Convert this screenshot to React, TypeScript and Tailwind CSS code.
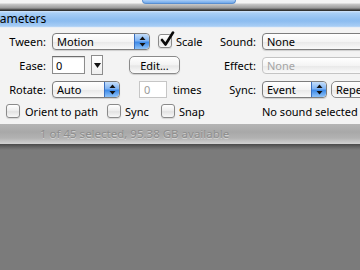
import React from "react";

function Stepper() {
  return (
    <span className="flex h-full w-[15px] shrink-0 items-center justify-center rounded-r-[4px] border-l border-[#3a6fc0] bg-[linear-gradient(#c4defb,#7fb3f3_45%,#3d8ae8_55%,#8fc3f8)]">
      <svg width="7" height="11" viewBox="0 0 7 11">
        <polygon points="3.5,0.5 6.5,4 0.5,4" fill="#111" />
        <polygon points="0.5,7 6.5,7 3.5,10.5" fill="#111" />
      </svg>
    </span>
  );
}

function Popup({
  className,
  label,
  disabled,
  stepper,
}: {
  className: string;
  label: string;
  disabled?: boolean;
  stepper?: boolean;
}) {
  return (
    <div
      className={`flex h-[17px] shrink-0 items-stretch rounded-[4px] border bg-[linear-gradient(#ffffff,#f4f4f4_50%,#e9e9e9_55%,#fafafa)] ${
        disabled ? "border-[#c4c4c4]" : "border-[#7d7d7d] shadow-[0_1px_1px_rgba(0,0,0,0.15)]"
      } ${className}`}
    >
      <span
        className={`flex flex-1 items-center pl-[4px] leading-none ${
          disabled ? "text-[#a5a5a5]" : "text-black"
        }`}
      >
        {label}
      </span>
      {stepper && <Stepper />}
    </div>
  );
}

function Check({ checked }: { checked?: boolean }) {
  return (
    <span className="relative flex h-[14px] w-[14px] shrink-0 rounded-[3px] border border-[#8a8a8a] bg-[linear-gradient(#ffffff,#ececec_50%,#e2e2e2_55%,#f8f8f8)] shadow-[0_1px_1px_rgba(0,0,0,0.12)]">
      {checked && (
        <svg
          className="absolute left-[1px] top-[-4px]"
          width="15"
          height="16"
          viewBox="0 0 15 16"
        >
          <path
            d="M2 9 L5.5 13.5 L13 1.5"
            fill="none"
            stroke="#0a0a0a"
            strokeWidth="2.6"
            strokeLinecap="round"
            strokeLinejoin="round"
          />
        </svg>
      )}
    </span>
  );
}

function Label({ children }: { children: React.ReactNode }) {
  return (
    <span className="w-[46px] shrink-0 text-right leading-none text-black">{children}</span>
  );
}

export default function App() {
  return (
    <div className="flex h-[270px] w-[360px] flex-col overflow-hidden bg-[#7b7b7b] font-['Noto_Sans',sans-serif] text-[11px]">
      {/* background window strip */}
      <div className="relative h-[11px] shrink-0 bg-[linear-gradient(#f4f4f4_0px,#f4f4f4_3px,#c9c9c9_4px,#9a9a9a_8px,#3c3c3c_10px,#2a2a2a_11px)]">
        <div className="absolute left-[142px] top-0 h-[4px] w-[94px] rounded-b-[5px] border border-t-0 border-[#5a8fd0] bg-[linear-gradient(#a9cdf6,#6fa8ec)]" />
      </div>

      {/* title bar */}
      <div className="flex h-[17px] shrink-0 items-center overflow-hidden border-b border-[#e8eef6] bg-[linear-gradient(#d3e6fb_0px,#a9cff6_2px,#90bff1_8px,#8dbdf0_10px,#a7cdf5_15px,#c0dbf7)]">
        <span className="ml-[-19px] text-[12px] leading-none text-black">Parameters</span>
      </div>

      {/* panel */}
      <div className="flex h-[96px] shrink-0 flex-col bg-[#f3f3f3] pt-[4px]">
        {/* row 1 */}
        <div className="flex h-[18px] items-center">
          <div className="flex w-[210px] shrink-0 items-center">
            <Label>Tween:</Label>
            <Popup className="ml-[6px] w-[98px]" label="Motion" stepper />
            <span className="ml-[8px]">
              <Check checked />
            </span>
            <span className="ml-[4px] leading-none">Scale</span>
          </div>
          <div className="flex items-center">
            <Label>Sound:</Label>
            <Popup className="ml-[6px] w-[120px]" label="None" />
          </div>
        </div>

        {/* row 2 */}
        <div className="mt-[5px] flex h-[20px] items-center">
          <div className="flex w-[210px] shrink-0 items-center">
            <Label>Ease:</Label>
            <span className="ml-[6px] flex h-[18px] w-[33px] items-center border border-[#8c8c8c] border-t-[#6e6e6e] bg-white pl-[3px] leading-none shadow-[inset_0_1px_1px_rgba(0,0,0,0.15)]">
              0
            </span>
            <span className="ml-[6px] flex h-[20px] w-[12px] items-center justify-center border border-[#8c8c8c] bg-[linear-gradient(#ffffff,#eeeeee)]">
              <svg width="7" height="5" viewBox="0 0 7 5">
                <polygon points="0,0 7,0 3.5,5" fill="#111" />
              </svg>
            </span>
            <span className="ml-[26px] flex h-[18px] w-[51px] items-center justify-center rounded-[5px] border border-[#8a8a8a] bg-[linear-gradient(#ffffff,#f2f2f2_50%,#e6e6e6_55%,#fbfbfb)] leading-none shadow-[0_1px_1px_rgba(0,0,0,0.15)]">
              Edit...
            </span>
          </div>
          <div className="flex items-center">
            <Label>Effect:</Label>
            <Popup className="ml-[6px] w-[120px]" label="None" disabled />
          </div>
        </div>

        {/* row 3 */}
        <div className="mt-[5px] flex h-[18px] items-center">
          <div className="flex w-[210px] shrink-0 items-center">
            <Label>Rotate:</Label>
            <Popup className="ml-[6px] w-[68px]" label="Auto" stepper />
            <span className="ml-[19px] flex h-[17px] w-[28px] items-center border border-[#c6c6c6] bg-white pl-[4px] leading-none text-[#9a9a9a]">
              0
            </span>
            <span className="ml-[6px] leading-none">times</span>
          </div>
          <div className="flex items-center">
            <Label>Sync:</Label>
            <Popup className="ml-[6px] w-[65px]" label="Event" stepper />
            <span className="ml-[4px] flex h-[17px] w-[60px] shrink-0 items-center rounded-[5px] border border-[#8a8a8a] bg-[linear-gradient(#ffffff,#f2f2f2_50%,#e6e6e6_55%,#fbfbfb)] pl-[4px] leading-none">
              Repeat
            </span>
          </div>
        </div>

        {/* row 4 */}
        <div className="mt-[4px] flex h-[18px] items-center">
          <div className="flex w-[256px] shrink-0 items-center pl-[6px]">
            <span className="flex w-[101px] items-center">
              <Check />
              <span className="ml-[5px] leading-none">Orient to path</span>
            </span>
            <span className="flex w-[54px] items-center">
              <Check />
              <span className="ml-[4px] leading-none">Sync</span>
            </span>
            <span className="flex items-center">
              <Check />
              <span className="ml-[4px] leading-none">Snap</span>
            </span>
          </div>
          <span className="ml-[6px] leading-none">No sound selected</span>
        </div>
      </div>

      {/* finder status bar */}
      <div className="flex h-[20px] shrink-0 items-center bg-[linear-gradient(#b4b4b4,#a8a8a8_40%,#b2b2b2_70%,#d2d2d2)] pl-[40px]">
        <span className="text-[11.5px] leading-none text-[#8e8e8e] [text-shadow:0_1px_0_rgba(255,255,255,0.45)]">
          1 of 45 selected, 95.38 GB available
        </span>
      </div>
      <div className="h-[6px] shrink-0 bg-[linear-gradient(#4a4a4a,#6a6a6a_60%,#7b7b7b)]" />
    </div>
  );
}
